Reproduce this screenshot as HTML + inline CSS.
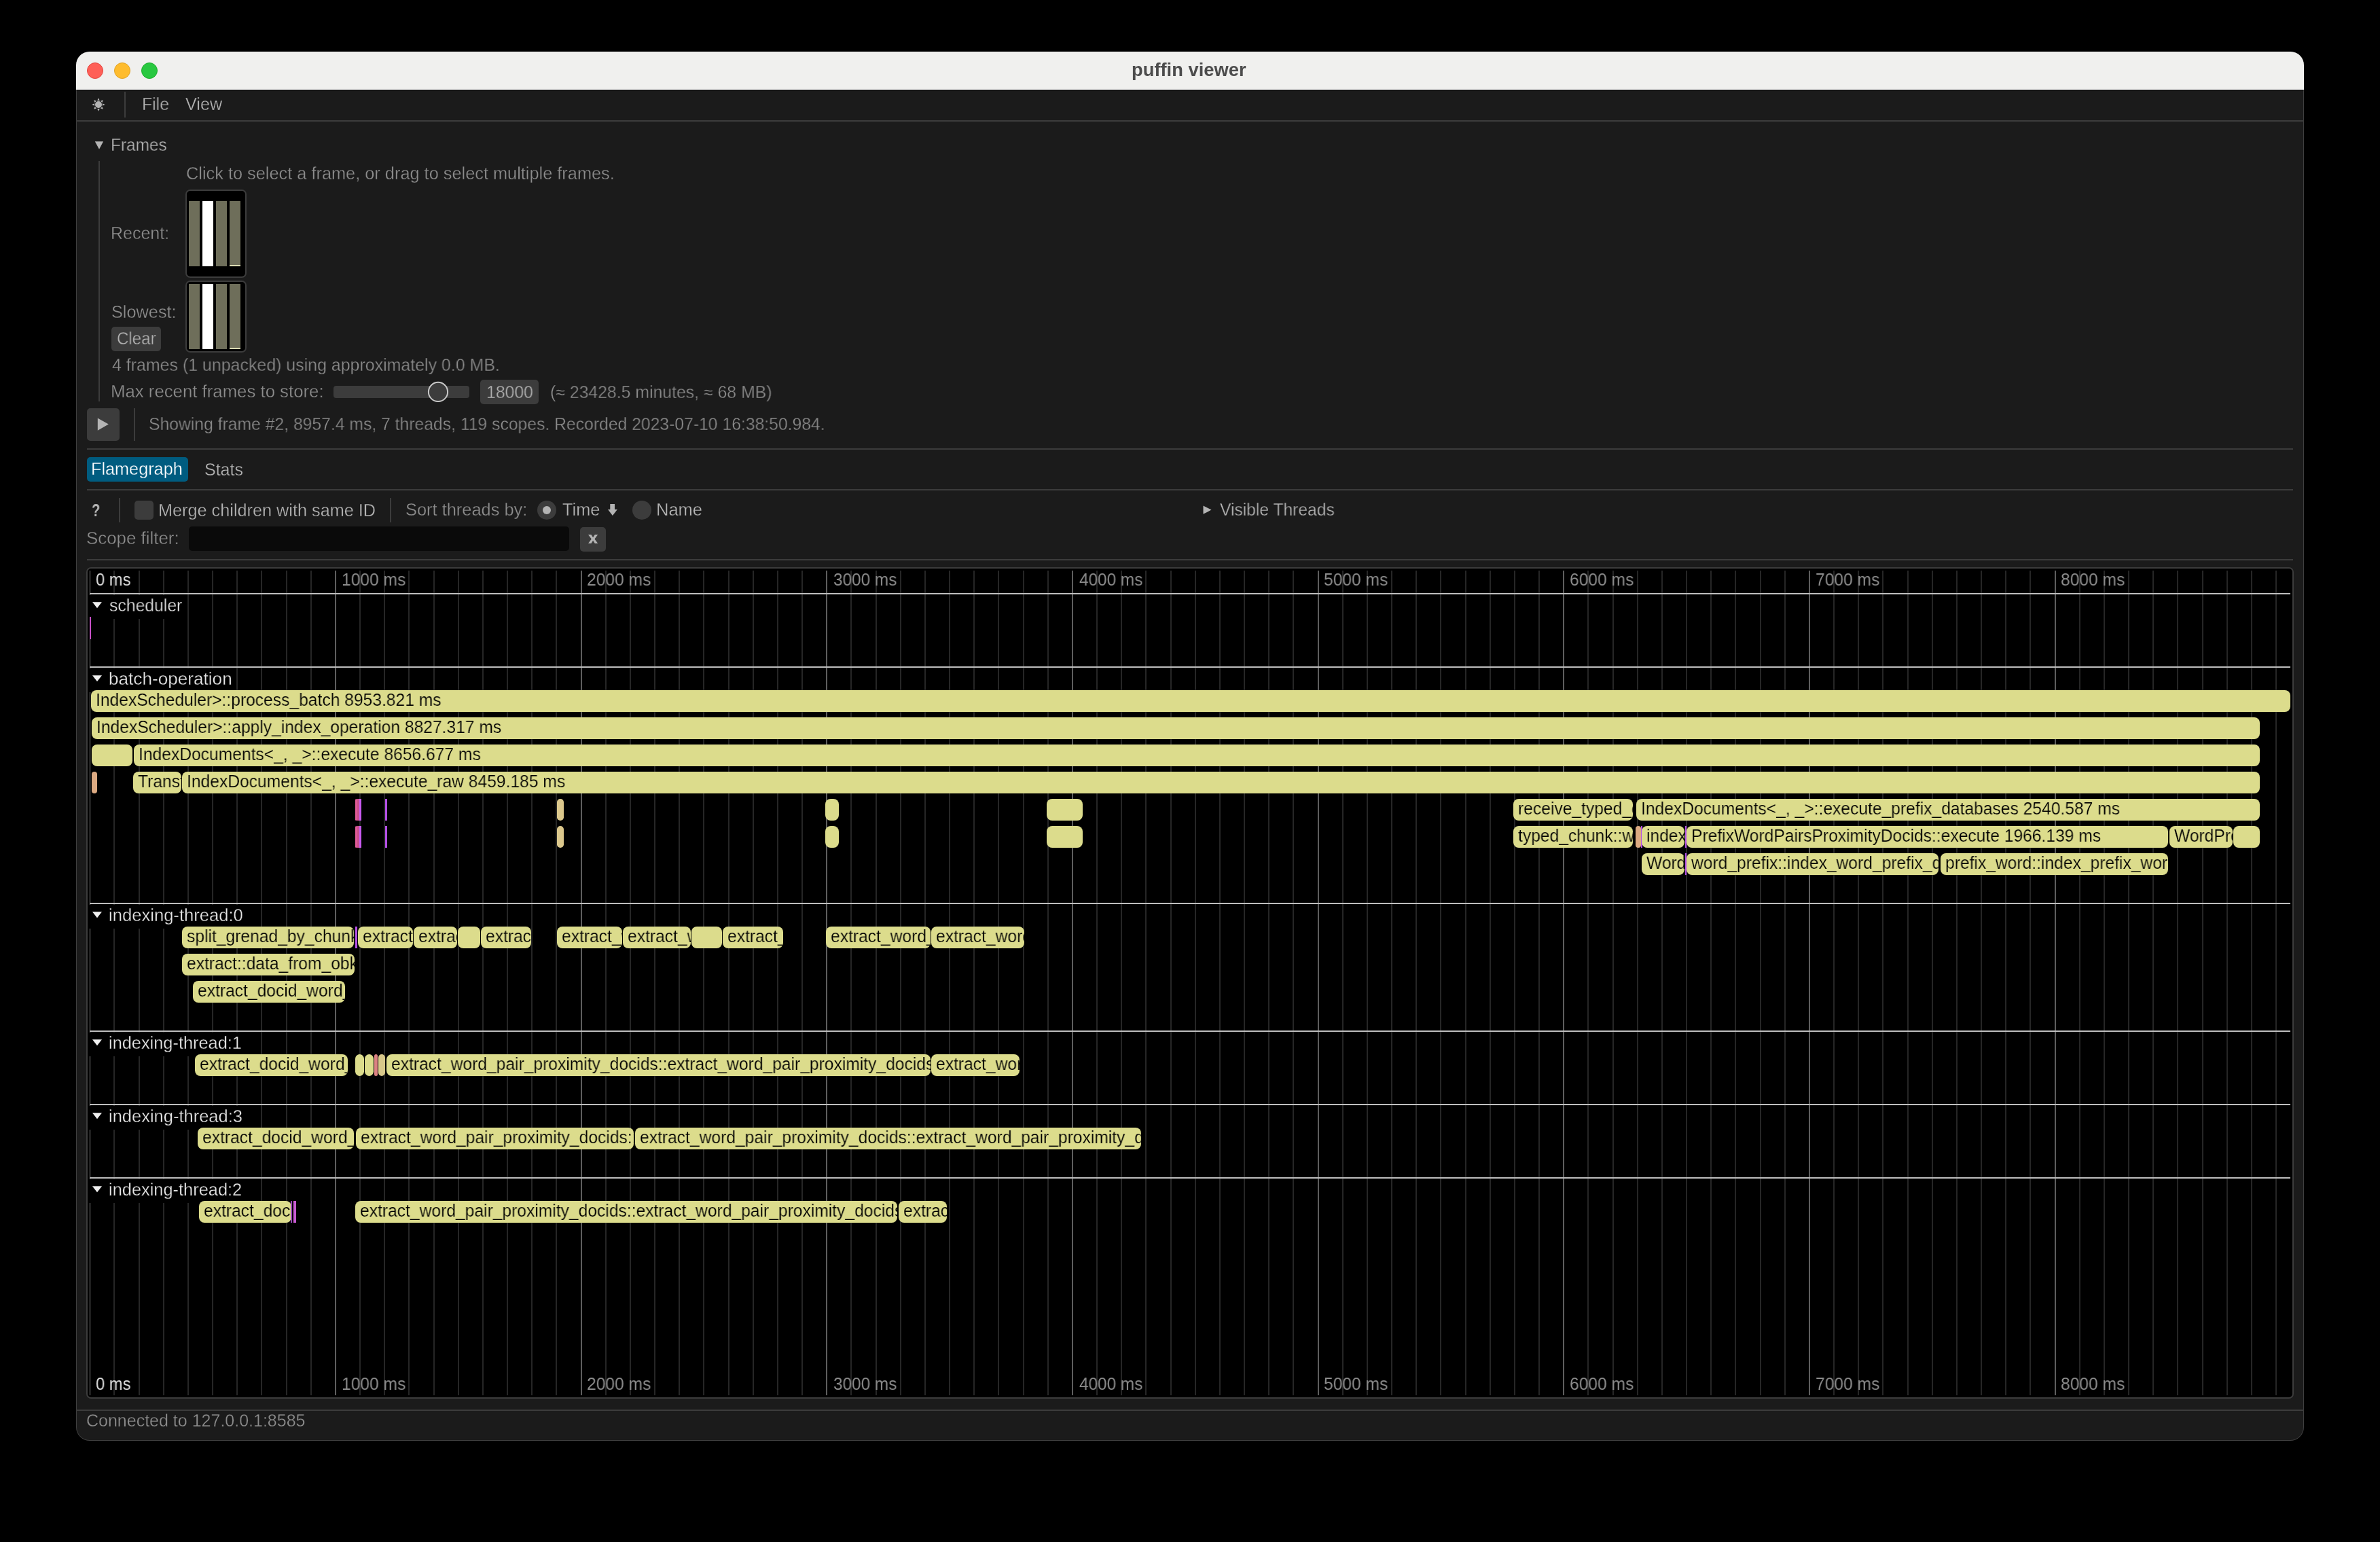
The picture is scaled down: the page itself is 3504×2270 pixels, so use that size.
<!DOCTYPE html>
<html><head><meta charset="utf-8"><style>
html,body{margin:0;padding:0;}
body{width:3504px;height:2270px;background:#000;position:relative;overflow:hidden;font-family:"Liberation Sans",sans-serif;}
body div{position:absolute;box-sizing:content-box;}
.t{white-space:pre;will-change:transform;}
</style></head><body>
<div style="left:112px;top:76px;width:3280px;height:2045px;border-radius:20px;background:#1b1b1b;overflow:hidden">
<div style="left:0;top:0;width:3280px;height:55px;background:#f0f0ee"></div>
<div style="left:0;top:55px;width:3280px;height:1px;background:#fafafa"></div>
<div style="left:0;top:56px;width:3280px;height:1px;background:#000"></div>
</div>
<div style="left:112px;top:76px;width:3278px;height:2043px;border-radius:20px;border:1px solid rgba(255,255,255,0.16);"></div>
<div style="left:128px;top:92px;width:22px;height:22px;border-radius:50%;background:#fe5f57;border:1px solid #e2463f"></div>
<div style="left:168px;top:92px;width:22px;height:22px;border-radius:50%;background:#febc2e;border:1px solid #e1a325"></div>
<div style="left:208px;top:92px;width:22px;height:22px;border-radius:50%;background:#28c840;border:1px solid #1dad2b"></div>
<div class="t" style="left:1665.99px;top:89.54px;font-size:27px;line-height:27px;color:#4c4c4c;font-weight:700;transform:scaleX(1.0120);transform-origin:0 0;">puffin viewer</div>
<svg style="position:absolute;left:133px;top:141.5px" width="24" height="24" viewBox="-12 -12 24 24"><circle cx="0" cy="0" r="5.0" fill="#b4b4b4"/><polygon points="-1.8,-5.9 1.8,-5.9 0,-9.7" fill="#b4b4b4" transform="rotate(0)"/><polygon points="-1.8,-5.9 1.8,-5.9 0,-9.7" fill="#b4b4b4" transform="rotate(45)"/><polygon points="-1.8,-5.9 1.8,-5.9 0,-9.7" fill="#b4b4b4" transform="rotate(90)"/><polygon points="-1.8,-5.9 1.8,-5.9 0,-9.7" fill="#b4b4b4" transform="rotate(135)"/><polygon points="-1.8,-5.9 1.8,-5.9 0,-9.7" fill="#b4b4b4" transform="rotate(180)"/><polygon points="-1.8,-5.9 1.8,-5.9 0,-9.7" fill="#b4b4b4" transform="rotate(225)"/><polygon points="-1.8,-5.9 1.8,-5.9 0,-9.7" fill="#b4b4b4" transform="rotate(270)"/><polygon points="-1.8,-5.9 1.8,-5.9 0,-9.7" fill="#b4b4b4" transform="rotate(315)"/></svg>
<div style="left:183px;top:135px;width:2px;height:38px;background:#3c3c3c;"></div>
<div class="t" style="left:209.02px;top:141.03px;font-size:25px;line-height:25px;color:#b4b4b4;font-weight:400;transform:scaleX(0.9899);transform-origin:0 0;-webkit-text-stroke:0.3px #1b1b1b;">File</div>
<div class="t" style="left:273.00px;top:141.03px;font-size:25px;line-height:25px;color:#b4b4b4;font-weight:400;transform:scaleX(1.0058);transform-origin:0 0;-webkit-text-stroke:0.3px #1b1b1b;">View</div>
<div style="left:112px;top:177px;width:3280px;height:2px;background:#3c3c3c;"></div>
<svg style="position:absolute;left:139px;top:207px" width="15" height="14"><polygon points="0.8,1.2 13.1,1.2 7,12.8" fill="#b4b4b4"/></svg>
<div class="t" style="left:163.05px;top:201.23px;font-size:25px;line-height:25px;color:#b4b4b4;font-weight:400;transform:scaleX(0.9765);transform-origin:0 0;-webkit-text-stroke:0.3px #1b1b1b;">Frames</div>
<div style="left:145px;top:237px;width:2px;height:354px;background:#3c3c3c;"></div>
<div class="t" style="left:273.69px;top:242.83px;font-size:25px;line-height:25px;color:#8c8c8c;font-weight:400;transform:scaleX(1.0134);transform-origin:0 0;-webkit-text-stroke:0.3px #1b1b1b;">Click to select a frame, or drag to select multiple frames.</div>
<div class="t" style="left:163.00px;top:331.13px;font-size:25px;line-height:25px;color:#8c8c8c;font-weight:400;-webkit-text-stroke:0.3px #1b1b1b;">Recent:</div>
<div class="t" style="left:163.69px;top:447.43px;font-size:25px;line-height:25px;color:#8c8c8c;font-weight:400;transform:scaleX(1.0116);transform-origin:0 0;-webkit-text-stroke:0.3px #1b1b1b;">Slowest:</div>
<div style="left:273px;top:279px;width:86px;height:126px;border:2px solid #3c3c3c;border-radius:7px;background:#000"></div>
<div style="left:278px;top:296px;width:16px;height:96px;background:#6e6e5a;"></div>
<div style="left:298px;top:296px;width:16px;height:96px;background:#ffffff;"></div>
<div style="left:318px;top:296px;width:16px;height:96px;background:#6e6e5a;"></div>
<div style="left:338px;top:296px;width:16px;height:96px;background:#6e6e5a;"></div>
<div style="left:338px;top:390px;width:16px;height:2px;background:#dcdcb4;"></div>
<div style="left:273px;top:413px;width:86px;height:102px;border:2px solid #3c3c3c;border-radius:7px;background:#000"></div>
<div style="left:278px;top:418px;width:16px;height:96px;background:#6e6e5a;"></div>
<div style="left:298px;top:418px;width:16px;height:96px;background:#ffffff;"></div>
<div style="left:318px;top:418px;width:16px;height:96px;background:#6e6e5a;"></div>
<div style="left:338px;top:418px;width:16px;height:96px;background:#6e6e5a;"></div>
<div style="left:338px;top:512px;width:16px;height:2px;background:#dcdcb4;"></div>
<div style="left:164px;top:481px;width:73px;height:36px;border-radius:5px;background:#3c3c3c"></div>
<div class="t" style="left:171.84px;top:485.83px;font-size:25px;line-height:25px;color:#b4b4b4;font-weight:400;transform:scaleX(0.9638);transform-origin:0 0;-webkit-text-stroke:0.3px #3c3c3c;">Clear</div>
<div class="t" style="left:164.70px;top:525.03px;font-size:25px;line-height:25px;color:#8c8c8c;font-weight:400;transform:scaleX(0.9971);transform-origin:0 0;-webkit-text-stroke:0.3px #1b1b1b;">4 frames (1 unpacked) using approximately 0.0 MB.</div>
<div class="t" style="left:162.64px;top:564.03px;font-size:25px;line-height:25px;color:#8c8c8c;font-weight:400;transform:scaleX(1.0305);transform-origin:0 0;-webkit-text-stroke:0.3px #1b1b1b;">Max recent frames to store:</div>
<div style="left:491px;top:568px;width:200px;height:18px;border-radius:4px;background:#3c3c3c"></div>
<svg style="position:absolute;left:625px;top:557px" width="40" height="40"><circle cx="20" cy="19.9" r="14.1" fill="#3c3c3c" stroke="#c8c8c8" stroke-width="2"/></svg>
<div style="left:707px;top:559px;width:86px;height:36px;border-radius:5px;background:#3c3c3c"></div>
<div class="t" style="left:716.01px;top:565.13px;font-size:25px;line-height:25px;color:#b4b4b4;font-weight:400;transform:scaleX(0.9909);transform-origin:0 0;-webkit-text-stroke:0.3px #3c3c3c;">18000</div>
<div class="t" style="left:809.51px;top:565.13px;font-size:25px;line-height:25px;color:#8c8c8c;font-weight:400;transform:scaleX(0.9922);transform-origin:0 0;-webkit-text-stroke:0.3px #1b1b1b;">(≈ 23428.5 minutes, ≈ 68 MB)</div>
<div style="left:128px;top:601px;width:48px;height:48px;border-radius:5px;background:#3c3c3c"></div>
<svg style="position:absolute;left:143px;top:615px" width="18" height="20"><polygon points="0.8,0.5 16.8,9.6 0.8,18.7" fill="#b4b4b4"/></svg>
<div style="left:197px;top:601px;width:2px;height:48px;background:#3c3c3c;"></div>
<div class="t" style="left:219.41px;top:611.83px;font-size:25px;line-height:25px;color:#8c8c8c;font-weight:400;transform:scaleX(0.9885);transform-origin:0 0;-webkit-text-stroke:0.3px #1b1b1b;">Showing frame #2, 8957.4 ms, 7 threads, 119 scopes. Recorded 2023-07-10 16:38:50.984.</div>
<div style="left:128px;top:660px;width:3248px;height:2px;background:#3c3c3c;"></div>
<div style="left:128px;top:673px;width:149px;height:36px;border-radius:5px;background:#005c80"></div>
<div class="t" style="left:134.48px;top:678.03px;font-size:25px;line-height:25px;color:#ffffff;font-weight:400;transform:scaleX(1.0100);transform-origin:0 0;-webkit-text-stroke:0.3px #005c80;">Flamegraph</div>
<div class="t" style="left:300.60px;top:678.53px;font-size:25px;line-height:25px;color:#b4b4b4;font-weight:400;-webkit-text-stroke:0.3px #1b1b1b;">Stats</div>
<div style="left:128px;top:720px;width:3248px;height:2px;background:#3c3c3c;"></div>
<div class="t" style="left:135.19px;top:738.53px;font-size:25px;line-height:25px;color:#b4b4b4;font-weight:700;transform:scaleX(0.8077);transform-origin:0 0;">?</div>
<div style="left:175px;top:733px;width:2px;height:36px;background:#3c3c3c;"></div>
<div style="left:198px;top:737px;width:28px;height:28px;border-radius:5px;background:#3c3c3c"></div>
<div class="t" style="left:232.98px;top:738.53px;font-size:25px;line-height:25px;color:#b4b4b4;font-weight:400;transform:scaleX(1.0104);transform-origin:0 0;-webkit-text-stroke:0.3px #1b1b1b;">Merge children with same ID</div>
<div style="left:574px;top:733px;width:2px;height:36px;background:#3c3c3c;"></div>
<div class="t" style="left:596.88px;top:738.13px;font-size:25px;line-height:25px;color:#8c8c8c;font-weight:400;transform:scaleX(1.0165);transform-origin:0 0;-webkit-text-stroke:0.3px #1b1b1b;">Sort threads by:</div>
<div style="left:791px;top:737px;width:28px;height:28px;border-radius:50%;background:#3c3c3c"></div>
<div style="left:799px;top:745px;width:12px;height:12px;border-radius:50%;background:#b4b4b4"></div>
<div class="t" style="left:827.50px;top:738.13px;font-size:25px;line-height:25px;color:#b4b4b4;font-weight:400;transform:scaleX(1.0126);transform-origin:0 0;-webkit-text-stroke:0.3px #1b1b1b;">Time</div>
<svg style="position:absolute;left:895px;top:742px" width="15" height="18"><path d="M3.3,0 H10 V8 H13.9 L6.9,17.1 L0,8 H3.3 Z" fill="#b4b4b4"/></svg>
<div style="left:931px;top:737px;width:28px;height:28px;border-radius:50%;background:#3c3c3c"></div>
<div class="t" style="left:965.56px;top:738.13px;font-size:25px;line-height:25px;color:#b4b4b4;font-weight:400;transform:scaleX(1.0206);transform-origin:0 0;-webkit-text-stroke:0.3px #1b1b1b;">Name</div>
<svg style="position:absolute;left:1771px;top:744px" width="14" height="14"><polygon points="0.5,0.5 12.5,6.6 0.5,12.7" fill="#b4b4b4"/></svg>
<div class="t" style="left:1796.30px;top:737.63px;font-size:25px;line-height:25px;color:#b4b4b4;font-weight:400;transform:scaleX(0.9845);transform-origin:0 0;-webkit-text-stroke:0.3px #1b1b1b;">Visible Threads</div>
<div class="t" style="left:127.36px;top:780.13px;font-size:25px;line-height:25px;color:#8c8c8c;font-weight:400;transform:scaleX(1.0352);transform-origin:0 0;-webkit-text-stroke:0.3px #1b1b1b;">Scope filter:</div>
<div style="left:278px;top:775px;width:560px;height:36px;border-radius:5px;background:#0a0a0a"></div>
<div style="left:854px;top:776px;width:38px;height:36px;border-radius:5px;background:#3c3c3c"></div>
<svg style="position:absolute;left:865.8px;top:786.9px" width="15" height="14"><polygon points="0,0 4.4,0 7.1,4.2 9.8,0 14.2,0 9.4,6.5 14.2,13 9.8,13 7.1,8.8 4.4,13 0,13 4.8,6.5" fill="#b4b4b4"/></svg>
<div style="left:128px;top:823px;width:3248px;height:2px;background:#3c3c3c;"></div>
<div style="left:112px;top:2075px;width:3280px;height:2px;background:#3c3c3c;"></div>
<div class="t" style="left:127.40px;top:2079.43px;font-size:25px;line-height:25px;color:#8c8c8c;font-weight:400;-webkit-text-stroke:0.3px #1b1b1b;">Connected to 127.0.0.1:8585</div>
<div style="left:127px;top:835px;width:3246px;height:1220px;border:2px solid #3c3c3c;border-radius:7px;background:#000;overflow:hidden">
</div>
<div style="left:131.55px;top:840px;width:1.5px;height:1214px;background:#8c8c8c"></div>
<div style="left:167.47px;top:840px;width:2px;height:1214px;background:#262626"></div>
<div style="left:203.63px;top:840px;width:2px;height:1214px;background:#262626"></div>
<div style="left:239.80px;top:840px;width:2px;height:1214px;background:#262626"></div>
<div style="left:275.96px;top:840px;width:2px;height:1214px;background:#262626"></div>
<div style="left:312.13px;top:840px;width:2px;height:1214px;background:#262626"></div>
<div style="left:348.30px;top:840px;width:2px;height:1214px;background:#262626"></div>
<div style="left:384.46px;top:840px;width:2px;height:1214px;background:#262626"></div>
<div style="left:420.63px;top:840px;width:2px;height:1214px;background:#262626"></div>
<div style="left:456.79px;top:840px;width:2px;height:1214px;background:#262626"></div>
<div style="left:492.96px;top:840px;width:2px;height:1214px;background:#5e5e5e"></div>
<div style="left:529.13px;top:840px;width:2px;height:1214px;background:#262626"></div>
<div style="left:565.29px;top:840px;width:2px;height:1214px;background:#262626"></div>
<div style="left:601.46px;top:840px;width:2px;height:1214px;background:#262626"></div>
<div style="left:637.62px;top:840px;width:2px;height:1214px;background:#262626"></div>
<div style="left:673.79px;top:840px;width:2px;height:1214px;background:#262626"></div>
<div style="left:709.96px;top:840px;width:2px;height:1214px;background:#262626"></div>
<div style="left:746.12px;top:840px;width:2px;height:1214px;background:#262626"></div>
<div style="left:782.29px;top:840px;width:2px;height:1214px;background:#262626"></div>
<div style="left:818.45px;top:840px;width:2px;height:1214px;background:#262626"></div>
<div style="left:854.62px;top:840px;width:2px;height:1214px;background:#5e5e5e"></div>
<div style="left:890.79px;top:840px;width:2px;height:1214px;background:#262626"></div>
<div style="left:926.95px;top:840px;width:2px;height:1214px;background:#262626"></div>
<div style="left:963.12px;top:840px;width:2px;height:1214px;background:#262626"></div>
<div style="left:999.28px;top:840px;width:2px;height:1214px;background:#262626"></div>
<div style="left:1035.45px;top:840px;width:2px;height:1214px;background:#262626"></div>
<div style="left:1071.62px;top:840px;width:2px;height:1214px;background:#262626"></div>
<div style="left:1107.78px;top:840px;width:2px;height:1214px;background:#262626"></div>
<div style="left:1143.95px;top:840px;width:2px;height:1214px;background:#262626"></div>
<div style="left:1180.11px;top:840px;width:2px;height:1214px;background:#262626"></div>
<div style="left:1216.28px;top:840px;width:2px;height:1214px;background:#5e5e5e"></div>
<div style="left:1252.45px;top:840px;width:2px;height:1214px;background:#262626"></div>
<div style="left:1288.61px;top:840px;width:2px;height:1214px;background:#262626"></div>
<div style="left:1324.78px;top:840px;width:2px;height:1214px;background:#262626"></div>
<div style="left:1360.94px;top:840px;width:2px;height:1214px;background:#262626"></div>
<div style="left:1397.11px;top:840px;width:2px;height:1214px;background:#262626"></div>
<div style="left:1433.28px;top:840px;width:2px;height:1214px;background:#262626"></div>
<div style="left:1469.44px;top:840px;width:2px;height:1214px;background:#262626"></div>
<div style="left:1505.61px;top:840px;width:2px;height:1214px;background:#262626"></div>
<div style="left:1541.77px;top:840px;width:2px;height:1214px;background:#262626"></div>
<div style="left:1577.94px;top:840px;width:2px;height:1214px;background:#5e5e5e"></div>
<div style="left:1614.11px;top:840px;width:2px;height:1214px;background:#262626"></div>
<div style="left:1650.27px;top:840px;width:2px;height:1214px;background:#262626"></div>
<div style="left:1686.44px;top:840px;width:2px;height:1214px;background:#262626"></div>
<div style="left:1722.60px;top:840px;width:2px;height:1214px;background:#262626"></div>
<div style="left:1758.77px;top:840px;width:2px;height:1214px;background:#262626"></div>
<div style="left:1794.94px;top:840px;width:2px;height:1214px;background:#262626"></div>
<div style="left:1831.10px;top:840px;width:2px;height:1214px;background:#262626"></div>
<div style="left:1867.27px;top:840px;width:2px;height:1214px;background:#262626"></div>
<div style="left:1903.43px;top:840px;width:2px;height:1214px;background:#262626"></div>
<div style="left:1939.60px;top:840px;width:2px;height:1214px;background:#5e5e5e"></div>
<div style="left:1975.77px;top:840px;width:2px;height:1214px;background:#262626"></div>
<div style="left:2011.93px;top:840px;width:2px;height:1214px;background:#262626"></div>
<div style="left:2048.10px;top:840px;width:2px;height:1214px;background:#262626"></div>
<div style="left:2084.26px;top:840px;width:2px;height:1214px;background:#262626"></div>
<div style="left:2120.43px;top:840px;width:2px;height:1214px;background:#262626"></div>
<div style="left:2156.60px;top:840px;width:2px;height:1214px;background:#262626"></div>
<div style="left:2192.76px;top:840px;width:2px;height:1214px;background:#262626"></div>
<div style="left:2228.93px;top:840px;width:2px;height:1214px;background:#262626"></div>
<div style="left:2265.09px;top:840px;width:2px;height:1214px;background:#262626"></div>
<div style="left:2301.26px;top:840px;width:2px;height:1214px;background:#5e5e5e"></div>
<div style="left:2337.43px;top:840px;width:2px;height:1214px;background:#262626"></div>
<div style="left:2373.59px;top:840px;width:2px;height:1214px;background:#262626"></div>
<div style="left:2409.76px;top:840px;width:2px;height:1214px;background:#262626"></div>
<div style="left:2445.92px;top:840px;width:2px;height:1214px;background:#262626"></div>
<div style="left:2482.09px;top:840px;width:2px;height:1214px;background:#262626"></div>
<div style="left:2518.26px;top:840px;width:2px;height:1214px;background:#262626"></div>
<div style="left:2554.42px;top:840px;width:2px;height:1214px;background:#262626"></div>
<div style="left:2590.59px;top:840px;width:2px;height:1214px;background:#262626"></div>
<div style="left:2626.75px;top:840px;width:2px;height:1214px;background:#262626"></div>
<div style="left:2662.92px;top:840px;width:2px;height:1214px;background:#5e5e5e"></div>
<div style="left:2699.09px;top:840px;width:2px;height:1214px;background:#262626"></div>
<div style="left:2735.25px;top:840px;width:2px;height:1214px;background:#262626"></div>
<div style="left:2771.42px;top:840px;width:2px;height:1214px;background:#262626"></div>
<div style="left:2807.58px;top:840px;width:2px;height:1214px;background:#262626"></div>
<div style="left:2843.75px;top:840px;width:2px;height:1214px;background:#262626"></div>
<div style="left:2879.92px;top:840px;width:2px;height:1214px;background:#262626"></div>
<div style="left:2916.08px;top:840px;width:2px;height:1214px;background:#262626"></div>
<div style="left:2952.25px;top:840px;width:2px;height:1214px;background:#262626"></div>
<div style="left:2988.41px;top:840px;width:2px;height:1214px;background:#262626"></div>
<div style="left:3024.58px;top:840px;width:2px;height:1214px;background:#5e5e5e"></div>
<div style="left:3060.75px;top:840px;width:2px;height:1214px;background:#262626"></div>
<div style="left:3096.91px;top:840px;width:2px;height:1214px;background:#262626"></div>
<div style="left:3133.08px;top:840px;width:2px;height:1214px;background:#262626"></div>
<div style="left:3169.24px;top:840px;width:2px;height:1214px;background:#262626"></div>
<div style="left:3205.41px;top:840px;width:2px;height:1214px;background:#262626"></div>
<div style="left:3241.58px;top:840px;width:2px;height:1214px;background:#262626"></div>
<div style="left:3277.74px;top:840px;width:2px;height:1214px;background:#262626"></div>
<div style="left:3313.91px;top:840px;width:2px;height:1214px;background:#262626"></div>
<div style="left:3350.07px;top:840px;width:2px;height:1214px;background:#262626"></div>
<div class="t" style="left:140.80px;top:841.03px;font-size:25px;line-height:25px;color:#e0e0e0;font-weight:400;transform:scaleX(0.9502);transform-origin:0 0;">0 ms</div>
<div class="t" style="left:140.80px;top:2024.83px;font-size:25px;line-height:25px;color:#e0e0e0;font-weight:400;transform:scaleX(0.9502);transform-origin:0 0;">0 ms</div>
<div class="t" style="left:502.58px;top:841.03px;font-size:25px;line-height:25px;color:#8c8c8c;font-weight:400;transform:scaleX(0.9832);transform-origin:0 0;">1000 ms</div>
<div class="t" style="left:502.58px;top:2024.83px;font-size:25px;line-height:25px;color:#8c8c8c;font-weight:400;transform:scaleX(0.9832);transform-origin:0 0;">1000 ms</div>
<div class="t" style="left:864.24px;top:841.03px;font-size:25px;line-height:25px;color:#8c8c8c;font-weight:400;transform:scaleX(0.9832);transform-origin:0 0;">2000 ms</div>
<div class="t" style="left:864.24px;top:2024.83px;font-size:25px;line-height:25px;color:#8c8c8c;font-weight:400;transform:scaleX(0.9832);transform-origin:0 0;">2000 ms</div>
<div class="t" style="left:1226.88px;top:841.03px;font-size:25px;line-height:25px;color:#8c8c8c;font-weight:400;transform:scaleX(0.9729);transform-origin:0 0;">3000 ms</div>
<div class="t" style="left:1226.88px;top:2024.83px;font-size:25px;line-height:25px;color:#8c8c8c;font-weight:400;transform:scaleX(0.9729);transform-origin:0 0;">3000 ms</div>
<div class="t" style="left:1588.54px;top:841.03px;font-size:25px;line-height:25px;color:#8c8c8c;font-weight:400;transform:scaleX(0.9729);transform-origin:0 0;">4000 ms</div>
<div class="t" style="left:1588.54px;top:2024.83px;font-size:25px;line-height:25px;color:#8c8c8c;font-weight:400;transform:scaleX(0.9729);transform-origin:0 0;">4000 ms</div>
<div class="t" style="left:1949.22px;top:841.03px;font-size:25px;line-height:25px;color:#8c8c8c;font-weight:400;transform:scaleX(0.9832);transform-origin:0 0;">5000 ms</div>
<div class="t" style="left:1949.22px;top:2024.83px;font-size:25px;line-height:25px;color:#8c8c8c;font-weight:400;transform:scaleX(0.9832);transform-origin:0 0;">5000 ms</div>
<div class="t" style="left:2310.88px;top:841.03px;font-size:25px;line-height:25px;color:#8c8c8c;font-weight:400;transform:scaleX(0.9832);transform-origin:0 0;">6000 ms</div>
<div class="t" style="left:2310.88px;top:2024.83px;font-size:25px;line-height:25px;color:#8c8c8c;font-weight:400;transform:scaleX(0.9832);transform-origin:0 0;">6000 ms</div>
<div class="t" style="left:2672.54px;top:841.03px;font-size:25px;line-height:25px;color:#8c8c8c;font-weight:400;transform:scaleX(0.9832);transform-origin:0 0;">7000 ms</div>
<div class="t" style="left:2672.54px;top:2024.83px;font-size:25px;line-height:25px;color:#8c8c8c;font-weight:400;transform:scaleX(0.9832);transform-origin:0 0;">7000 ms</div>
<div class="t" style="left:3034.20px;top:841.03px;font-size:25px;line-height:25px;color:#8c8c8c;font-weight:400;transform:scaleX(0.9832);transform-origin:0 0;">8000 ms</div>
<div class="t" style="left:3034.20px;top:2024.83px;font-size:25px;line-height:25px;color:#8c8c8c;font-weight:400;transform:scaleX(0.9832);transform-origin:0 0;">8000 ms</div>
<div style="left:132px;top:873px;width:3240px;height:2px;background:#bebebe;"></div>
<div style="left:132px;top:981px;width:3240px;height:2px;background:#bebebe;"></div>
<div style="left:132px;top:1329px;width:3240px;height:2px;background:#bebebe;"></div>
<div style="left:132px;top:1517px;width:3240px;height:2px;background:#bebebe;"></div>
<div style="left:132px;top:1625px;width:3240px;height:2px;background:#bebebe;"></div>
<div style="left:132px;top:1733px;width:3240px;height:2px;background:#bebebe;"></div>
<div style="left:129px;top:876px;width:143.60000000000002px;height:35px;background:#000;"></div>
<svg style="position:absolute;left:136px;top:886px" width="15" height="10"><polygon points="0,0.3 14,0.3 7,9.2" fill="#f0f0f0"/></svg>
<div class="t" style="left:160.60px;top:879.03px;font-size:25px;line-height:25px;color:#e5e5e5;font-weight:400;transform:scaleX(0.9901);transform-origin:0 0;-webkit-text-stroke:0.3px #000;">scheduler</div>
<div style="left:129px;top:984px;width:216.29999999999995px;height:35px;background:#000;"></div>
<svg style="position:absolute;left:136px;top:994px" width="15" height="10"><polygon points="0,0.3 14,0.3 7,9.2" fill="#f0f0f0"/></svg>
<div class="t" style="left:159.55px;top:987.03px;font-size:25px;line-height:25px;color:#e5e5e5;font-weight:400;transform:scaleX(1.0458);transform-origin:0 0;-webkit-text-stroke:0.3px #000;">batch-operation</div>
<div style="left:129px;top:1332px;width:232.5px;height:35px;background:#000;"></div>
<svg style="position:absolute;left:136px;top:1342px" width="15" height="10"><polygon points="0,0.3 14,0.3 7,9.2" fill="#f0f0f0"/></svg>
<div class="t" style="left:159.58px;top:1335.03px;font-size:25px;line-height:25px;color:#e5e5e5;font-weight:400;transform:scaleX(1.0241);transform-origin:0 0;-webkit-text-stroke:0.3px #000;">indexing-thread:0</div>
<div style="left:129px;top:1520px;width:230.60000000000002px;height:35px;background:#000;"></div>
<svg style="position:absolute;left:136px;top:1530px" width="15" height="10"><polygon points="0,0.3 14,0.3 7,9.2" fill="#f0f0f0"/></svg>
<div class="t" style="left:159.59px;top:1523.03px;font-size:25px;line-height:25px;color:#e5e5e5;font-weight:400;transform:scaleX(1.0142);transform-origin:0 0;-webkit-text-stroke:0.3px #000;">indexing-thread:1</div>
<div style="left:129px;top:1628px;width:231.60000000000002px;height:35px;background:#000;"></div>
<svg style="position:absolute;left:136px;top:1638px" width="15" height="10"><polygon points="0,0.3 14,0.3 7,9.2" fill="#f0f0f0"/></svg>
<div class="t" style="left:159.58px;top:1631.03px;font-size:25px;line-height:25px;color:#e5e5e5;font-weight:400;transform:scaleX(1.0194);transform-origin:0 0;-webkit-text-stroke:0.3px #000;">indexing-thread:3</div>
<div style="left:129px;top:1736px;width:230.89999999999998px;height:35px;background:#000;"></div>
<svg style="position:absolute;left:136px;top:1746px" width="15" height="10"><polygon points="0,0.3 14,0.3 7,9.2" fill="#f0f0f0"/></svg>
<div class="t" style="left:159.58px;top:1739.03px;font-size:25px;line-height:25px;color:#e5e5e5;font-weight:400;transform:scaleX(1.0158);transform-origin:0 0;-webkit-text-stroke:0.3px #000;">indexing-thread:2</div>
<div style="left:132px;top:908px;width:2px;height:33px;background:#c850c8;"></div>
<div style="left:133.50px;top:1016px;width:3238.50px;height:32px;border-radius:8.00px;background:#dcdc8c;overflow:hidden"><span style="position:absolute;left:7px;top:1.83px;font-size:25px;line-height:25px;white-space:pre;color:#000;-webkit-text-stroke:0.2px #dcdc8c;will-change:transform;transform:scaleX(0.985);transform-origin:0 0">IndexScheduler&gt;::process_batch 8953.821 ms</span></div>
<div style="left:134.50px;top:1056px;width:3192.50px;height:32px;border-radius:8.00px;background:#dcdc8c;overflow:hidden"><span style="position:absolute;left:7px;top:1.83px;font-size:25px;line-height:25px;white-space:pre;color:#000;-webkit-text-stroke:0.2px #dcdc8c;will-change:transform;transform:scaleX(0.985);transform-origin:0 0">IndexScheduler&gt;::apply_index_operation 8827.317 ms</span></div>
<div style="left:134.70px;top:1096px;width:60.50px;height:32px;border-radius:8.00px;background:#dcdc8c;overflow:hidden"></div>
<div style="left:196.50px;top:1096px;width:3130.50px;height:32px;border-radius:8.00px;background:#dcdc8c;overflow:hidden"><span style="position:absolute;left:7px;top:1.83px;font-size:25px;line-height:25px;white-space:pre;color:#000;-webkit-text-stroke:0.2px #dcdc8c;will-change:transform;transform:scaleX(0.985);transform-origin:0 0">IndexDocuments&lt;_, _&gt;::execute 8656.677 ms</span></div>
<div style="left:134.70px;top:1136px;width:8.10px;height:32px;border-radius:4.05px;background:#dcaa82;overflow:hidden"></div>
<div style="left:196.00px;top:1136px;width:71.00px;height:32px;border-radius:8.00px;background:#dcdc8c;overflow:hidden"><span style="position:absolute;left:7px;top:1.83px;font-size:25px;line-height:25px;white-space:pre;color:#000;-webkit-text-stroke:0.2px #dcdc8c;will-change:transform;transform:scaleX(0.985);transform-origin:0 0">Transform::read_documents</span></div>
<div style="left:268.00px;top:1136px;width:3059.00px;height:32px;border-radius:8.00px;background:#dcdc8c;overflow:hidden"><span style="position:absolute;left:7px;top:1.83px;font-size:25px;line-height:25px;white-space:pre;color:#000;-webkit-text-stroke:0.2px #dcdc8c;will-change:transform;transform:scaleX(0.985);transform-origin:0 0">IndexDocuments&lt;_, _&gt;::execute_raw 8459.185 ms</span></div>
<div style="left:523.00px;top:1176px;width:3.00px;height:32px;border-radius:1.50px;background:#e05a96;overflow:hidden"></div>
<div style="left:526px;top:1176px;width:3px;height:32px;background:#c8508c;"></div>
<div style="left:529px;top:1176px;width:3px;height:32px;background:#c85af0;"></div>
<div style="left:567px;top:1176px;width:2.5px;height:32px;background:#b450e6;"></div>
<div style="left:820.00px;top:1176px;width:9.70px;height:32px;border-radius:4.85px;background:#dcc88c;overflow:hidden"></div>
<div style="left:1215.20px;top:1176px;width:19.90px;height:32px;border-radius:8.00px;background:#dcdc8c;overflow:hidden"></div>
<div style="left:1540.80px;top:1176px;width:52.80px;height:32px;border-radius:8.00px;background:#dcdc8c;overflow:hidden"></div>
<div style="left:523.00px;top:1216px;width:3.00px;height:32px;border-radius:1.50px;background:#e05a96;overflow:hidden"></div>
<div style="left:526px;top:1216px;width:3px;height:32px;background:#c8508c;"></div>
<div style="left:529px;top:1216px;width:3px;height:32px;background:#c85af0;"></div>
<div style="left:567px;top:1216px;width:2.5px;height:32px;background:#b450e6;"></div>
<div style="left:820.00px;top:1216px;width:9.70px;height:32px;border-radius:4.85px;background:#dcc88c;overflow:hidden"></div>
<div style="left:1215.20px;top:1216px;width:19.90px;height:32px;border-radius:8.00px;background:#dcdc8c;overflow:hidden"></div>
<div style="left:1540.80px;top:1216px;width:52.80px;height:32px;border-radius:8.00px;background:#dcdc8c;overflow:hidden"></div>
<div style="left:2228.40px;top:1176px;width:175.80px;height:32px;border-radius:8.00px;background:#dcdc8c;overflow:hidden"><span style="position:absolute;left:7px;top:1.83px;font-size:25px;line-height:25px;white-space:pre;color:#000;-webkit-text-stroke:0.2px #dcdc8c;will-change:transform;transform:scaleX(0.985);transform-origin:0 0">receive_typed_chunk 158.233 ms</span></div>
<div style="left:2408.60px;top:1176px;width:918.40px;height:32px;border-radius:8.00px;background:#dcdc8c;overflow:hidden"><span style="position:absolute;left:7px;top:1.83px;font-size:25px;line-height:25px;white-space:pre;color:#000;-webkit-text-stroke:0.2px #dcdc8c;will-change:transform;transform:scaleX(0.985);transform-origin:0 0">IndexDocuments&lt;_, _&gt;::execute_prefix_databases 2540.587 ms</span></div>
<div style="left:2228.40px;top:1216px;width:175.80px;height:32px;border-radius:8.00px;background:#dcdc8c;overflow:hidden"><span style="position:absolute;left:7px;top:1.83px;font-size:25px;line-height:25px;white-space:pre;color:#000;-webkit-text-stroke:0.2px #dcdc8c;will-change:transform;transform:scaleX(0.985);transform-origin:0 0">typed_chunk::write_typed_chunk_into_index 158.2 ms</span></div>
<div style="left:2408.00px;top:1216px;width:8.00px;height:32px;border-radius:4.00px;background:#dcaa82;overflow:hidden"></div>
<div style="left:2416px;top:1216px;width:2px;height:32px;background:#b450e6;"></div>
<div style="left:2417.40px;top:1216px;width:62.60px;height:32px;border-radius:8.00px;background:#dcdc8c;overflow:hidden"><span style="position:absolute;left:7px;top:1.83px;font-size:25px;line-height:25px;white-space:pre;color:#000;-webkit-text-stroke:0.2px #dcdc8c;will-change:transform;transform:scaleX(0.985);transform-origin:0 0">index_word_prefix_database</span></div>
<div style="left:2480.5px;top:1216px;width:2px;height:32px;background:#b450e6;"></div>
<div style="left:2482.60px;top:1216px;width:709.00px;height:32px;border-radius:8.00px;background:#dcdc8c;overflow:hidden"><span style="position:absolute;left:7px;top:1.83px;font-size:25px;line-height:25px;white-space:pre;color:#000;-webkit-text-stroke:0.2px #dcdc8c;will-change:transform;transform:scaleX(0.985);transform-origin:0 0">PrefixWordPairsProximityDocids::execute 1966.139 ms</span></div>
<div style="left:3193.50px;top:1216px;width:93.70px;height:32px;border-radius:8.00px;background:#dcdc8c;overflow:hidden"><span style="position:absolute;left:7px;top:1.83px;font-size:25px;line-height:25px;white-space:pre;color:#000;-webkit-text-stroke:0.2px #dcdc8c;will-change:transform;transform:scaleX(0.985);transform-origin:0 0">WordPrefixIntegerDocids::execute</span></div>
<div style="left:3288.30px;top:1216px;width:38.70px;height:32px;border-radius:8.00px;background:#dcdc8c;overflow:hidden"></div>
<div style="left:2417.40px;top:1256px;width:62.60px;height:32px;border-radius:8.00px;background:#dcdc8c;overflow:hidden"><span style="position:absolute;left:7px;top:1.83px;font-size:25px;line-height:25px;white-space:pre;color:#000;-webkit-text-stroke:0.2px #dcdc8c;will-change:transform;transform:scaleX(0.985);transform-origin:0 0">WordPrefixDocids::execute</span></div>
<div style="left:2480.5px;top:1256px;width:2px;height:32px;background:#b450e6;"></div>
<div style="left:2482.60px;top:1256px;width:371.80px;height:32px;border-radius:8.00px;background:#dcdc8c;overflow:hidden"><span style="position:absolute;left:7px;top:1.83px;font-size:25px;line-height:25px;white-space:pre;color:#000;-webkit-text-stroke:0.2px #dcdc8c;will-change:transform;transform:scaleX(0.985);transform-origin:0 0">word_prefix::index_word_prefix_database 1023.5 ms</span></div>
<div style="left:2856.50px;top:1256px;width:335.10px;height:32px;border-radius:8.00px;background:#dcdc8c;overflow:hidden"><span style="position:absolute;left:7px;top:1.83px;font-size:25px;line-height:25px;white-space:pre;color:#000;-webkit-text-stroke:0.2px #dcdc8c;will-change:transform;transform:scaleX(0.985);transform-origin:0 0">prefix_word::index_prefix_word_database 930.2 ms</span></div>
<div style="left:267.60px;top:1364px;width:253.90px;height:32px;border-radius:8.00px;background:#dcdc8c;overflow:hidden"><span style="position:absolute;left:7px;top:1.83px;font-size:25px;line-height:25px;white-space:pre;color:#000;-webkit-text-stroke:0.2px #dcdc8c;will-change:transform;transform:scaleX(0.985);transform-origin:0 0">split_grenad_by_chunk 702.1 ms</span></div>
<div style="left:522.5px;top:1364px;width:3px;height:32px;background:#b450e6;"></div>
<div style="left:526.50px;top:1364px;width:81.70px;height:32px;border-radius:8.00px;background:#dcdc8c;overflow:hidden"><span style="position:absolute;left:7px;top:1.83px;font-size:25px;line-height:25px;white-space:pre;color:#000;-webkit-text-stroke:0.2px #dcdc8c;will-change:transform;transform:scaleX(0.985);transform-origin:0 0">extract_word_docids</span></div>
<div style="left:609.10px;top:1364px;width:63.90px;height:32px;border-radius:8.00px;background:#dcdc8c;overflow:hidden"><span style="position:absolute;left:7px;top:1.83px;font-size:25px;line-height:25px;white-space:pre;color:#000;-webkit-text-stroke:0.2px #dcdc8c;will-change:transform;transform:scaleX(0.985);transform-origin:0 0">extract_word_positions_docids</span></div>
<div style="left:673.80px;top:1364px;width:33.00px;height:32px;border-radius:8.00px;background:#dcdc8c;overflow:hidden"></div>
<div style="left:708.20px;top:1364px;width:73.60px;height:32px;border-radius:8.00px;background:#dcdc8c;overflow:hidden"><span style="position:absolute;left:7px;top:1.83px;font-size:25px;line-height:25px;white-space:pre;color:#000;-webkit-text-stroke:0.2px #dcdc8c;will-change:transform;transform:scaleX(0.985);transform-origin:0 0">extract_fid_word_count_docids</span></div>
<div style="left:819.90px;top:1364px;width:95.80px;height:32px;border-radius:8.00px;background:#dcdc8c;overflow:hidden"><span style="position:absolute;left:7px;top:1.83px;font-size:25px;line-height:25px;white-space:pre;color:#000;-webkit-text-stroke:0.2px #dcdc8c;will-change:transform;transform:scaleX(0.985);transform-origin:0 0">extract_word_docids</span></div>
<div style="left:916.70px;top:1364px;width:100.30px;height:32px;border-radius:8.00px;background:#dcdc8c;overflow:hidden"><span style="position:absolute;left:7px;top:1.83px;font-size:25px;line-height:25px;white-space:pre;color:#000;-webkit-text-stroke:0.2px #dcdc8c;will-change:transform;transform:scaleX(0.985);transform-origin:0 0">extract_word_position_docids</span></div>
<div style="left:1017.90px;top:1364px;width:45.30px;height:32px;border-radius:8.00px;background:#dcdc8c;overflow:hidden"></div>
<div style="left:1064.20px;top:1364px;width:88.50px;height:32px;border-radius:8.00px;background:#dcdc8c;overflow:hidden"><span style="position:absolute;left:7px;top:1.83px;font-size:25px;line-height:25px;white-space:pre;color:#000;-webkit-text-stroke:0.2px #dcdc8c;will-change:transform;transform:scaleX(0.985);transform-origin:0 0">extract_facet_string_docids</span></div>
<div style="left:1215.90px;top:1364px;width:154.20px;height:32px;border-radius:8.00px;background:#dcdc8c;overflow:hidden"><span style="position:absolute;left:7px;top:1.83px;font-size:25px;line-height:25px;white-space:pre;color:#000;-webkit-text-stroke:0.2px #dcdc8c;will-change:transform;transform:scaleX(0.985);transform-origin:0 0">extract_word_docids::extract</span></div>
<div style="left:1371.40px;top:1364px;width:136.60px;height:32px;border-radius:8.00px;background:#dcdc8c;overflow:hidden"><span style="position:absolute;left:7px;top:1.83px;font-size:25px;line-height:25px;white-space:pre;color:#000;-webkit-text-stroke:0.2px #dcdc8c;will-change:transform;transform:scaleX(0.985);transform-origin:0 0">extract_word_pair_proximity</span></div>
<div style="left:267.60px;top:1404px;width:254.80px;height:32px;border-radius:8.00px;background:#dcdc8c;overflow:hidden"><span style="position:absolute;left:7px;top:1.83px;font-size:25px;line-height:25px;white-space:pre;color:#000;-webkit-text-stroke:0.2px #dcdc8c;will-change:transform;transform:scaleX(0.985);transform-origin:0 0">extract::data_from_obkv_documents 702.2 ms</span></div>
<div style="left:283.80px;top:1444px;width:223.80px;height:32px;border-radius:8.00px;background:#dcdc8c;overflow:hidden"><span style="position:absolute;left:7px;top:1.83px;font-size:25px;line-height:25px;white-space:pre;color:#000;-webkit-text-stroke:0.2px #dcdc8c;will-change:transform;transform:scaleX(0.985);transform-origin:0 0">extract_docid_word_positions 620.3 ms</span></div>
<div style="left:286.80px;top:1552px;width:225.20px;height:32px;border-radius:8.00px;background:#dcdc8c;overflow:hidden"><span style="position:absolute;left:7px;top:1.83px;font-size:25px;line-height:25px;white-space:pre;color:#000;-webkit-text-stroke:0.2px #dcdc8c;will-change:transform;transform:scaleX(0.985);transform-origin:0 0">extract_docid_word_positions 620.3 ms</span></div>
<div style="left:523.00px;top:1552px;width:13.20px;height:32px;border-radius:6.60px;background:#dcdc8c;overflow:hidden"></div>
<div style="left:537.00px;top:1552px;width:13.00px;height:32px;border-radius:6.50px;background:#dcdc8c;overflow:hidden"></div>
<div style="left:550.90px;top:1552px;width:5.30px;height:32px;border-radius:2.65px;background:#dc8282;overflow:hidden"></div>
<div style="left:557.00px;top:1552px;width:10.00px;height:32px;border-radius:5.00px;background:#d8c88a;overflow:hidden"></div>
<div style="left:568.50px;top:1552px;width:801.20px;height:32px;border-radius:8.00px;background:#dcdc8c;overflow:hidden"><span style="position:absolute;left:7px;top:1.83px;font-size:25px;line-height:25px;white-space:pre;color:#000;-webkit-text-stroke:0.2px #dcdc8c;will-change:transform;transform:scaleX(0.985);transform-origin:0 0">extract_word_pair_proximity_docids::extract_word_pair_proximity_docids 2215 ms</span></div>
<div style="left:1370.90px;top:1552px;width:130.40px;height:32px;border-radius:8.00px;background:#dcdc8c;overflow:hidden"><span style="position:absolute;left:7px;top:1.83px;font-size:25px;line-height:25px;white-space:pre;color:#000;-webkit-text-stroke:0.2px #dcdc8c;will-change:transform;transform:scaleX(0.985);transform-origin:0 0">extract_word_pair_proximity_docids</span></div>
<div style="left:291.20px;top:1660px;width:230.30px;height:32px;border-radius:8.00px;background:#dcdc8c;overflow:hidden"><span style="position:absolute;left:7px;top:1.83px;font-size:25px;line-height:25px;white-space:pre;color:#000;-webkit-text-stroke:0.2px #dcdc8c;will-change:transform;transform:scaleX(0.985);transform-origin:0 0">extract_docid_word_positions 637.2 ms</span></div>
<div style="left:523.50px;top:1660px;width:409.60px;height:32px;border-radius:8.00px;background:#dcdc8c;overflow:hidden"><span style="position:absolute;left:7px;top:1.83px;font-size:25px;line-height:25px;white-space:pre;color:#000;-webkit-text-stroke:0.2px #dcdc8c;will-change:transform;transform:scaleX(0.985);transform-origin:0 0">extract_word_pair_proximity_docids::extract</span></div>
<div style="left:934.90px;top:1660px;width:744.90px;height:32px;border-radius:8.00px;background:#dcdc8c;overflow:hidden"><span style="position:absolute;left:7px;top:1.83px;font-size:25px;line-height:25px;white-space:pre;color:#000;-webkit-text-stroke:0.2px #dcdc8c;will-change:transform;transform:scaleX(0.985);transform-origin:0 0">extract_word_pair_proximity_docids::extract_word_pair_proximity_docids 2056 ms</span></div>
<div style="left:293.30px;top:1768px;width:135.50px;height:32px;border-radius:8.00px;background:#dcdc8c;overflow:hidden"><span style="position:absolute;left:7px;top:1.83px;font-size:25px;line-height:25px;white-space:pre;color:#000;-webkit-text-stroke:0.2px #dcdc8c;will-change:transform;transform:scaleX(0.985);transform-origin:0 0">extract_docid_word_positions 371 ms</span></div>
<div style="left:428.4px;top:1768px;width:2px;height:32px;background:#9646b4;"></div>
<div style="left:432px;top:1768px;width:4px;height:32px;background:#c85ad2;"></div>
<div style="left:523.00px;top:1768px;width:798.30px;height:32px;border-radius:8.00px;background:#dcdc8c;overflow:hidden"><span style="position:absolute;left:7px;top:1.83px;font-size:25px;line-height:25px;white-space:pre;color:#000;-webkit-text-stroke:0.2px #dcdc8c;will-change:transform;transform:scaleX(0.985);transform-origin:0 0">extract_word_pair_proximity_docids::extract_word_pair_proximity_docids 2208 ms</span></div>
<div style="left:1323.30px;top:1768px;width:71.10px;height:32px;border-radius:8.00px;background:#dcdc8c;overflow:hidden"><span style="position:absolute;left:7px;top:1.83px;font-size:25px;line-height:25px;white-space:pre;color:#000;-webkit-text-stroke:0.2px #dcdc8c;will-change:transform;transform:scaleX(0.985);transform-origin:0 0">extract_word_docids</span></div>
</body></html>
